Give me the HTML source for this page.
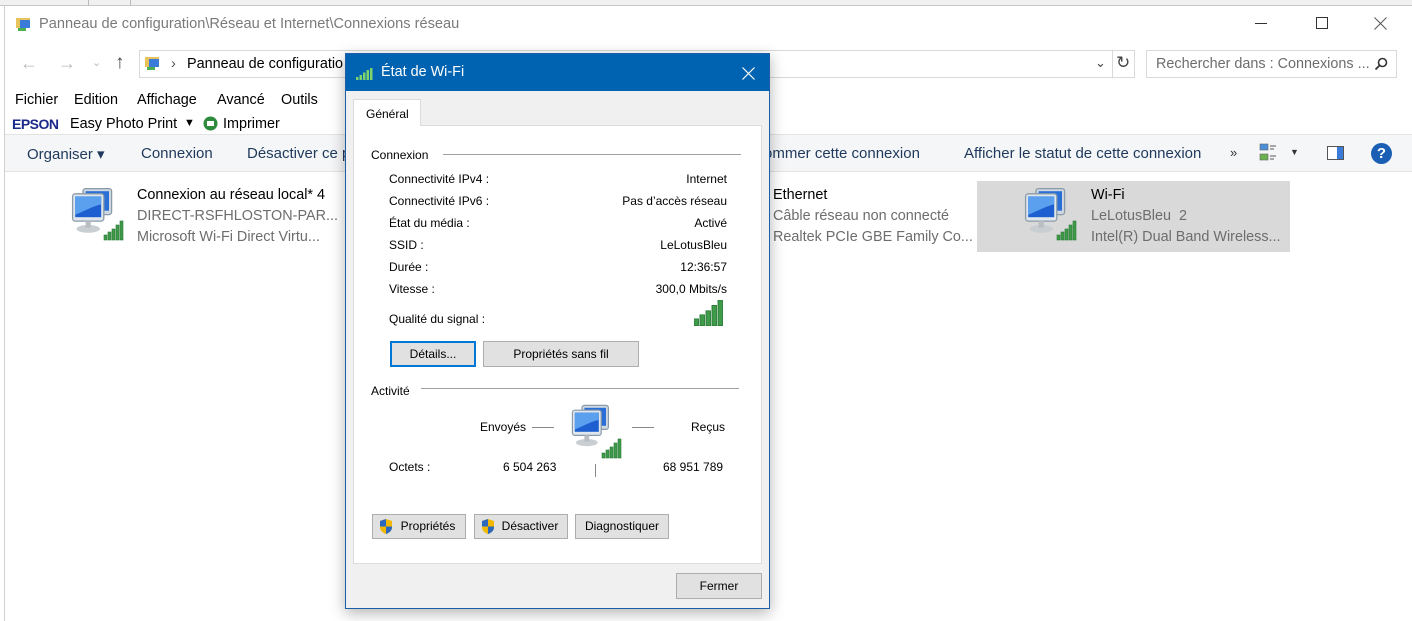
<!DOCTYPE html>
<html><head><meta charset="utf-8"><style>
*{margin:0;padding:0;box-sizing:border-box}
body{width:1412px;height:621px;overflow:hidden;background:#fff;font-family:"Liberation Sans",sans-serif;position:relative;color:#000}
.a{position:absolute;white-space:nowrap}
.f14{font-size:14.4px}
.tb{font-size:15px;color:#1e395b}
.g{color:#6d6d6d}
.d{font-size:12px}
.btn{position:absolute;background:#e1e1e1;border:1px solid #adadad;font-size:12px;text-align:center}
</style></head><body>
<svg width="0" height="0" style="position:absolute"><defs>
<g id="net">
<rect x="10" y="2" width="22" height="20" rx="2" fill="#cfd8e0" stroke="#8a9aa8"/>
<rect x="12" y="4" width="18" height="15" fill="#2a6fd6"/>
<rect x="2" y="6" width="24" height="21" rx="2" fill="#dfe6ec" stroke="#8a9aa8"/>
<rect x="4" y="8" width="20" height="16" fill="#1d5fd0"/>
<path d="M4 8h20v6c-8 2-14 6-20 8z" fill="#5aa0ee"/>
<ellipse cx="14" cy="33" rx="9" ry="3" fill="#c9ced3"/>
<rect x="12" y="27" width="4" height="5" fill="#b8bec4"/>
</g>
<g id="sig" fill="#3f9a4a" stroke="#2a7a35" stroke-width=".6">
<rect x="0" y="14" width="3" height="5"/><rect x="4" y="11" width="3" height="8"/><rect x="8" y="8" width="3" height="11"/><rect x="12" y="4" width="3" height="15"/><rect x="16" y="0" width="3" height="19"/>
</g>
<g id="shield"><path d="M8 1L14 3V9C14 13 11 15 8 16C5 15 2 13 2 9V3Z" fill="#f2b800"/><path d="M8 1V8.5H2V3ZM8 8.5H14V9C14 13 11 15 8 16Z" fill="#2c67c0"/></g>
</defs></svg>

<div class="a" style="left:0;top:0;width:1412px;height:6px;background:#f0f0f0;border-bottom:1px solid #c8c8c8"></div>
<div class="a" style="left:88px;top:0;width:1px;height:6px;background:#bbb"></div>
<div class="a" style="left:130px;top:0;width:1px;height:6px;background:#bbb"></div>
<div class="a" style="left:4px;top:6px;width:1px;height:615px;background:#d0d0d0"></div>

<svg class="a" style="left:15px;top:16px" width="18" height="16"><rect x="1" y="2" width="14" height="10" fill="#e8c25a"/><rect x="5" y="4" width="10" height="8" fill="#3a7ad8"/><rect x="3" y="12" width="8" height="3" fill="#4caf50"/></svg>
<div class="a" style="left:39px;top:16px;color:#7a7a7a;font-size:14.6px">Panneau de configuration\Réseau et Internet\Connexions réseau</div>
<div class="a" style="left:1255px;top:23px;width:12px;height:1px;background:#333"></div>
<div class="a" style="left:1316px;top:17px;width:12px;height:12px;border:1px solid #333"></div>
<svg class="a" style="left:1374px;top:17px" width="13" height="13"><path d="M0.5 0.5L12.5 12.5M12.5 0.5L0.5 12.5" stroke="#555" stroke-width="1"/></svg>

<div class="a" style="left:20px;top:53px;color:#bbb;font-size:18px">←</div>
<div class="a" style="left:58px;top:53px;color:#bbb;font-size:18px">→</div>
<div class="a" style="left:92px;top:56px;color:#bbb;font-size:11px">⌄</div>
<div class="a" style="left:115px;top:52px;color:#444;font-size:19px">↑</div>
<div class="a" style="left:139px;top:50px;width:996px;height:28px;border:1px solid #d9d9d9"></div>
<div class="a" style="left:1112px;top:50px;width:1px;height:28px;background:#d9d9d9"></div>
<svg class="a" style="left:144px;top:55px" width="18" height="16"><rect x="1" y="2" width="14" height="10" fill="#e8c25a"/><rect x="5" y="4" width="10" height="8" fill="#3a7ad8"/><rect x="3" y="12" width="8" height="3" fill="#4caf50"/></svg>
<div class="a f14" style="left:171px;top:56px;color:#555">›</div>
<div class="a f14" style="left:187px;top:56px">Panneau de configuratio</div>
<div class="a" style="left:1095px;top:55px;color:#444;font-size:13px">⌄</div>
<div class="a" style="left:1116px;top:53px;color:#444;font-size:17px">↻</div>
<div class="a" style="left:1146px;top:50px;width:251px;height:28px;border:1px solid #d9d9d9"></div>
<div class="a" style="left:1156px;top:56px;color:#6d6d6d;font-size:14.4px">Rechercher dans : Connexions ...</div>
<svg class="a" style="left:1374px;top:57px" width="14" height="14"><circle cx="8.5" cy="5.5" r="4" fill="none" stroke="#333" stroke-width="1.6"/><path d="M5.5 8.5L1.5 12.5" stroke="#333" stroke-width="1.8"/></svg>

<div class="a f14" style="left:15px;top:92px">Fichier</div>
<div class="a f14" style="left:74px;top:92px">Edition</div>
<div class="a f14" style="left:137px;top:92px">Affichage</div>
<div class="a f14" style="left:217px;top:92px">Avancé</div>
<div class="a f14" style="left:281px;top:92px">Outils</div>
<div class="a" style="left:12px;top:116px;font-weight:bold;font-size:14px;color:#1b2a8a;letter-spacing:-0.5px">EPSON</div>
<div class="a f14" style="left:70px;top:116px">Easy Photo Print</div>
<div class="a" style="left:184px;top:117px;font-size:11px">▼</div>
<svg class="a" style="left:203px;top:116px" width="15" height="15"><circle cx="7.5" cy="7.5" r="7" fill="#2e8b3e"/><rect x="4" y="5" width="7" height="5" fill="#fff"/></svg>
<div class="a f14" style="left:223px;top:116px">Imprimer</div>

<div class="a" style="left:5px;top:134px;width:1407px;height:38px;background:#f5f6f7;border-top:1px solid #e3e3e3;border-bottom:1px solid #e3e3e3"></div>
<div class="a tb" style="left:27px;top:145px">Organiser ▾</div>
<div class="a tb" style="left:141px;top:145px">Connexion</div>
<div class="a tb" style="left:247px;top:145px">Désactiver ce p</div>
<div class="a tb" style="left:764px;top:145px">ommer cette connexion</div>
<div class="a tb" style="left:964px;top:145px">Afficher le statut de cette connexion</div>
<div class="a" style="left:1230px;top:145px;font-size:13px;color:#333">»</div>
<svg class="a" style="left:1259px;top:143px" width="20" height="20"><rect x="1" y="1" width="8" height="6" fill="#4a8fd8" stroke="#666" stroke-width=".6"/><rect x="1" y="11" width="8" height="6" fill="#6ab04c" stroke="#666" stroke-width=".6"/><path d="M11 3h6M11 6h4M11 13h6M11 16h4" stroke="#555"/></svg>
<div class="a" style="left:1290px;top:147px;font-size:9px;color:#333">▼</div>
<div class="a" style="left:1327px;top:146px;width:17px;height:14px;border:1px solid #555;background:#fff"><div style="position:absolute;right:0;top:0;width:6px;height:12px;background:#3a7ad8"></div></div>
<div class="a" style="left:1371px;top:143px;width:21px;height:21px;border-radius:50%;background:#1a5fb4;color:#fff;font-weight:bold;font-size:15px;text-align:center;line-height:21px">?</div>

<svg class="a" style="left:70px;top:186px" width="62" height="56"><use href="#net" transform="scale(1.3)"/><use href="#sig" x="34" y="35"/></svg>
<div class="a f14" style="left:137px;top:187px">Connexion au réseau local* 4</div>
<div class="a f14 g" style="left:137px;top:208px">DIRECT-RSFHLOSTON-PAR...</div>
<div class="a f14 g" style="left:137px;top:229px">Microsoft Wi-Fi Direct Virtu...</div>
<div class="a f14" style="left:773px;top:187px">Ethernet</div>
<div class="a f14 g" style="left:773px;top:208px">Câble réseau non connecté</div>
<div class="a f14 g" style="left:773px;top:229px">Realtek PCIe GBE Family Co...</div>
<div class="a" style="left:977px;top:181px;width:313px;height:71px;background:#d9d9d9"></div>
<svg class="a" style="left:1023px;top:186px" width="62" height="56"><use href="#net" transform="scale(1.3)"/><use href="#sig" x="34" y="35"/></svg>
<div class="a f14" style="left:1091px;top:187px">Wi-Fi</div>
<div class="a f14 g" style="left:1091px;top:208px">LeLotusBleu&nbsp; 2</div>
<div class="a f14 g" style="left:1091px;top:229px">Intel(R) Dual Band Wireless...</div>

<div class="a" style="left:345px;top:53px;width:425px;height:556px;background:#f0f0f0;border:1px solid #1c5fa8;box-shadow:0 4px 14px rgba(0,0,0,.3)">
  <div style="position:absolute;left:0;top:0;width:423px;height:37px;background:#0063b1"></div>
  <svg style="position:absolute;left:10px;top:14px" width="20" height="12"><rect x="0" y="9" width="2.5" height="3" fill="#7ed36b"/><rect x="3.5" y="7" width="2.5" height="5" fill="#7ed36b"/><rect x="7" y="4.5" width="2.5" height="7.5" fill="#7ed36b"/><rect x="10.5" y="2" width="2.5" height="10" fill="#7ed36b"/><rect x="14" y="0" width="2.5" height="12" fill="#7ed36b"/></svg>
  <div style="position:absolute;left:35px;top:10px;color:#fff;font-size:14.4px">État de Wi-Fi</div>
  <svg style="position:absolute;left:396px;top:13px" width="13" height="13"><path d="M0.5 0.5L12.5 12.5M12.5 0.5L0.5 12.5" stroke="#fff" stroke-width="1.2"/></svg>
  <div style="position:absolute;left:7px;top:71px;width:409px;height:439px;background:#fff;border:1px solid #dcdcdc"></div>
  <div style="position:absolute;left:7px;top:45px;width:68px;height:27px;background:#fff;border:1px solid #dcdcdc;border-bottom:none;font-size:12px;padding:7px 0 0 12px">Général</div>
</div>
<div class="a d" style="left:371px;top:148px">Connexion</div>
<div class="a" style="left:443px;top:154px;width:298px;height:1px;background:#a0a0a0"></div>
<div class="a d" style="left:389px;top:172px">Connectivité IPv4 :</div>
<div class="a d" style="left:389px;top:194px">Connectivité IPv6 :</div>
<div class="a d" style="left:389px;top:216px">État du média :</div>
<div class="a d" style="left:389px;top:238px">SSID :</div>
<div class="a d" style="left:389px;top:260px">Durée :</div>
<div class="a d" style="left:389px;top:282px">Vitesse :</div>
<div class="a d" style="left:389px;top:312px">Qualité du signal :</div>
<div class="a d" style="right:685px;top:172px">Internet</div>
<div class="a d" style="right:685px;top:194px">Pas d’accès réseau</div>
<div class="a d" style="right:685px;top:216px">Activé</div>
<div class="a d" style="right:685px;top:238px">LeLotusBleu</div>
<div class="a d" style="right:685px;top:260px">12:36:57</div>
<div class="a d" style="right:685px;top:282px">300,0 Mbits/s</div>
<svg class="a" style="left:694px;top:300px" width="30" height="26"><g transform="scale(1.5,1.35)"><use href="#sig"/></g></svg>
<div class="btn" style="left:390px;top:341px;width:86px;height:26px;border:2px solid #0078d7;line-height:22px">Détails...</div>
<div class="btn" style="left:483px;top:341px;width:156px;height:26px;line-height:24px">Propriétés sans fil</div>
<div class="a d" style="left:371px;top:384px">Activité</div>
<div class="a" style="left:421px;top:388px;width:318px;height:1px;background:#a0a0a0"></div>
<div class="a d" style="left:480px;top:420px">Envoyés</div>
<div class="a" style="left:532px;top:427px;width:22px;height:1px;background:#888"></div>
<div class="a" style="left:632px;top:427px;width:22px;height:1px;background:#888"></div>
<div class="a d" style="left:691px;top:420px">Reçus</div>
<svg class="a" style="left:570px;top:403px" width="62" height="56"><use href="#net" transform="scale(1.2)"/><use href="#sig" x="32" y="36"/></svg>
<div class="a d" style="left:389px;top:460px">Octets :</div>
<div class="a d" style="left:503px;top:460px">6 504 263</div>
<div class="a" style="left:595px;top:464px;width:1px;height:13px;background:#888"></div>
<div class="a d" style="left:663px;top:460px">68 951 789</div>
<div class="btn" style="left:372px;top:514px;width:94px;height:25px;line-height:23px;padding-left:18px"><svg style="position:absolute;left:5px;top:3px" width="16" height="17"><use href="#shield"/></svg>Propriétés</div>
<div class="btn" style="left:474px;top:514px;width:94px;height:25px;line-height:23px;padding-left:18px"><svg style="position:absolute;left:5px;top:3px" width="16" height="17"><use href="#shield"/></svg>Désactiver</div>
<div class="btn" style="left:575px;top:514px;width:94px;height:25px;line-height:23px">Diagnostiquer</div>
<div class="btn" style="left:676px;top:573px;width:86px;height:26px;line-height:24px">Fermer</div>
</body></html>
